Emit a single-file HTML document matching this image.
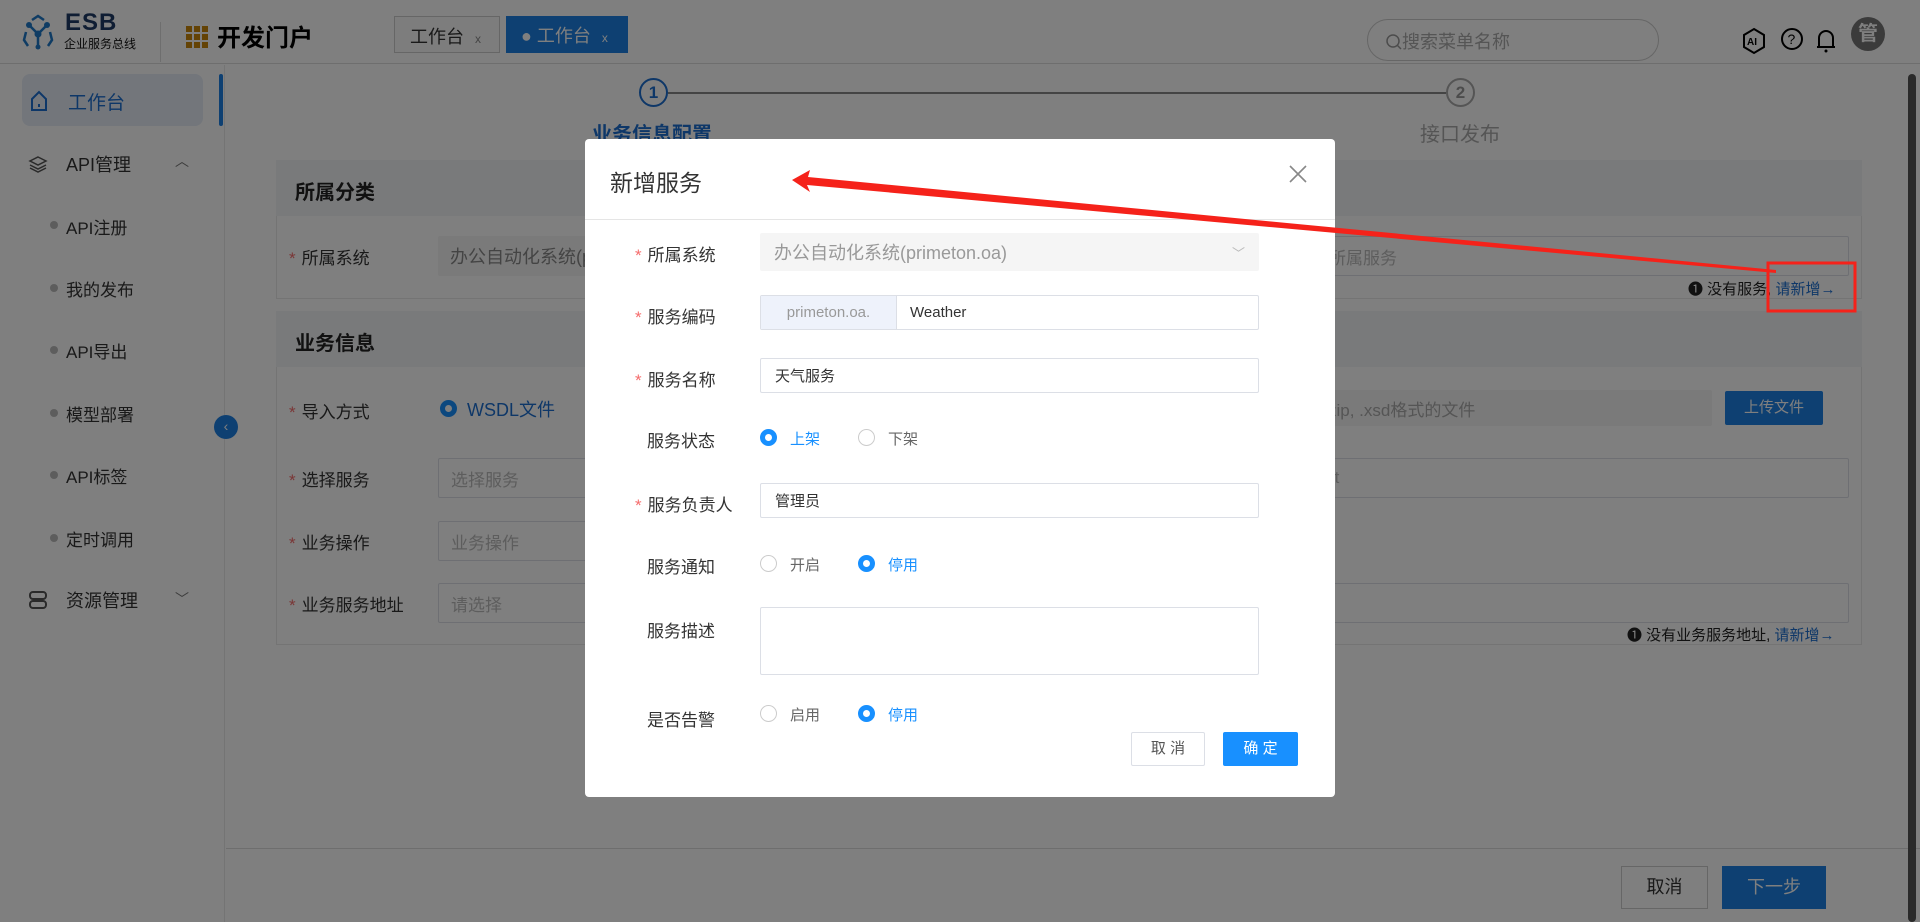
<!DOCTYPE html>
<html><head><meta charset="utf-8"><style>
*{box-sizing:border-box;margin:0;padding:0}
body{width:1920px;height:922px;overflow:hidden;position:relative;background:#fff;font-family:"Liberation Sans","Noto Sans CJK SC",sans-serif;color:#333;font-size:17px}
.a{position:absolute}
.inp{position:absolute;border:1px solid #dcdfe6;background:#fff;border-radius:2px;color:#bbb;font-size:17px;padding-left:12px;display:flex;align-items:center}
.req{color:#f56c6c;margin-right:6px}
.lbl{position:absolute;font-size:17px;color:#333}
.side{position:absolute;left:52px;font-size:17px;color:#333}
.dot{position:absolute;left:50px;width:8px;height:8px;border-radius:50%;background:#bbb}
.mlbl{position:absolute;font-size:17px;color:#333;left:635px;white-space:nowrap}
.mlbl.n{left:647px}
.mi{position:absolute;left:760px;width:499px;height:35px;border:1px solid #dcdfe6;border-radius:2px;background:#fff;font-size:15px;color:#333;display:flex;align-items:center;padding-left:14px}
.rad{position:absolute;width:17px;height:17px;border-radius:50%;border:1px solid #ccc;background:#fff}
.rad.on{border:5px solid #1890ff}
.rt{position:absolute;font-size:15px;color:#666}
.rt.on{color:#1890ff}
</style></head><body>
<!-- header -->
<div class="a" style="left:0;top:0;width:1920px;height:64px;border-bottom:1px solid #ddd;background:#fff"></div>
<svg class="a" style="left:20px;top:14px" width="36" height="36" viewBox="0 0 36 36"><g stroke="#1e78c8" stroke-width="2.5" fill="none"><path d="M12 6 L18 2 L24 6"/><path d="M6 18 L4 26 L8 32"/><path d="M30 18 L32 26 L28 32"/><path d="M9 11 L18 20 L27 11 M18 20 V32"/></g><circle cx="9" cy="11" r="3" fill="#1e78c8"/><circle cx="27" cy="11" r="3" fill="#1e78c8"/><circle cx="18" cy="20" r="3.5" fill="#1e78c8"/><circle cx="18" cy="33" r="2.5" fill="#1e78c8"/></svg>
<div class="a" style="left:65px;top:9px;font-size:24px;font-weight:bold;color:#1e3b66;letter-spacing:1px">ESB</div>
<div class="a" style="left:64px;top:35px;font-size:12px;color:#111">企业服务总线</div>
<div class="a" style="left:160px;top:22px;width:1px;height:40px;background:#ddd"></div>
<svg class="a" style="left:186px;top:26px" width="22" height="22"><g fill="#c8870a"><rect x="0" y="0" width="6" height="6"/><rect x="8" y="0" width="6" height="6"/><rect x="16" y="0" width="6" height="6"/><rect x="0" y="8" width="6" height="6"/><rect x="8" y="8" width="6" height="6"/><rect x="16" y="8" width="6" height="6"/><rect x="0" y="16" width="6" height="6"/><rect x="8" y="16" width="6" height="6"/><rect x="16" y="16" width="6" height="6"/></g></svg>
<div class="a" style="left:217px;top:18px;font-size:24px;font-weight:bold;color:#000">开发门户</div>
<div class="a" style="left:394px;top:16px;width:106px;height:37px;border:1px solid #ccc;background:#fafafa;font-size:18px;color:#333;padding:6px 0 0 15px">工作台 <span style="font-size:12px;color:#888;margin-left:6px">x</span></div>
<div class="a" style="left:506px;top:16px;width:122px;height:37px;background:#1c80e4;color:#fff;font-size:18px;padding:6px 0 0 15px">● 工作台 <span style="font-size:12px;margin-left:6px">x</span></div>
<div class="a" style="left:1367px;top:19px;width:292px;height:42px;border:1px solid #ccc;border-radius:21px;font-size:18px;color:#aaa;padding:8px 0 0 18px">
<svg width="16" height="16" style="vertical-align:-2px"><circle cx="7" cy="7" r="6" fill="none" stroke="#999" stroke-width="1.5"/><path d="M11 11 L15 15" stroke="#999" stroke-width="1.5"/></svg>搜索菜单名称</div>
<svg class="a" style="left:1741px;top:27px" width="26" height="28" viewBox="0 0 26 28"><path d="M13 2 L23 8 V20 L13 26 L3 20 V8 Z" fill="none" stroke="#000" stroke-width="2"/><text x="6" y="18" font-size="10" font-weight="bold" font-family="Liberation Sans">AI</text></svg>
<svg class="a" style="left:1780px;top:27px" width="24" height="24"><circle cx="12" cy="12" r="10" fill="none" stroke="#000" stroke-width="2"/><text x="7.5" y="17" font-size="14" font-family="Liberation Sans">?</text></svg>
<svg class="a" style="left:1815px;top:26px" width="22" height="28"><path d="M4 21 V12 A7 7 0 0 1 18 12 V21 Z M2 21 H20" fill="none" stroke="#000" stroke-width="2"/><circle cx="11" cy="25" r="1.5" fill="#000"/></svg>
<div class="a" style="left:1851px;top:17px;width:34px;height:34px;border-radius:50%;background:#777;color:#fff;font-size:20px;text-align:center;line-height:34px;font-weight:bold">管</div>
<!-- sidebar -->
<div class="a" style="left:0;top:65px;width:225px;height:857px;background:#fff;border-right:1px solid #e8e8e8"></div>
<div class="a" style="left:22px;top:74px;width:181px;height:52px;background:#e6edf7;border-radius:8px"></div>
<div class="a" style="left:219px;top:74px;width:4px;height:52px;background:#1c80e4;border-radius:2px"></div>
<svg class="a" style="left:30px;top:90px" width="18" height="22"><path d="M2 9 L9 2 L16 9 V20 H2 Z" fill="none" stroke="#1c6fd0" stroke-width="2"/><path d="M9 14 V17" stroke="#1c6fd0" stroke-width="2"/></svg>
<div class="side" style="left:68px;top:88px;color:#1c6fd0;font-size:19px">工作台</div>
<svg class="a" style="left:28px;top:155px" width="20" height="18"><path d="M10 2 L18 6 L10 10 L2 6 Z M2 10 L10 14 L18 10 M2 13 L10 17 L18 13" fill="none" stroke="#555" stroke-width="1.5"/></svg>
<div class="side" style="left:66px;top:151px;font-size:18px">API管理</div>
<div class="a" style="left:175px;top:151px;color:#777;font-size:14px">︿</div>
<div class="dot" style="top:221px"></div><div class="side" style="left:66px;top:214px">API注册</div>
<div class="dot" style="top:284px"></div><div class="side" style="left:66px;top:276px">我的发布</div>
<div class="dot" style="top:346px"></div><div class="side" style="left:66px;top:338px">API导出</div>
<div class="dot" style="top:409px"></div><div class="side" style="left:66px;top:401px">模型部署</div>
<div class="dot" style="top:471px"></div><div class="side" style="left:66px;top:463px">API标签</div>
<div class="dot" style="top:534px"></div><div class="side" style="left:66px;top:526px">定时调用</div>
<svg class="a" style="left:28px;top:590px" width="20" height="20"><rect x="2" y="2" width="16" height="7" rx="3" fill="none" stroke="#555" stroke-width="2"/><rect x="2" y="11" width="16" height="7" rx="3" fill="none" stroke="#555" stroke-width="2"/></svg>
<div class="side" style="left:66px;top:587px;font-size:18px">资源管理</div>
<div class="a" style="left:175px;top:589px;color:#777;font-size:14px">﹀</div>
<div class="a" style="left:214px;top:415px;width:24px;height:24px;border-radius:50%;background:#1c80e4;color:#fff;font-size:14px;text-align:center;line-height:23px">‹</div>
<!-- steps -->
<div class="a" style="left:639px;top:78px;width:29px;height:29px;border:2px solid #1c6fd0;border-radius:50%;color:#1c6fd0;text-align:center;line-height:25px;font-size:17px;font-weight:bold">1</div>
<div class="a" style="left:668px;top:92px;width:778px;height:2px;background:#888"></div>
<div class="a" style="left:1446px;top:78px;width:29px;height:29px;border:2px solid #aaa;border-radius:50%;color:#999;text-align:center;line-height:25px;font-size:17px;font-weight:bold">2</div>
<div class="a" style="left:592px;top:118px;font-size:20px;font-weight:bold;color:#1c6fd0">业务信息配置</div>
<div class="a" style="left:1420px;top:118px;font-size:20px;color:#aaa">接口发布</div>
<!-- card1 -->
<div class="a" style="left:276px;top:160px;width:1586px;height:139px;border:1px solid #e8e8e8"></div>
<div class="a" style="left:276px;top:160px;width:1586px;height:56px;background:#f2f4f7"></div>
<div class="a" style="left:295px;top:176px;font-size:20px;font-weight:bold;color:#222">所属分类</div>
<div class="lbl" style="left:289px;top:244px"><span class="req">*</span>所属系统</div>
<div class="inp" style="left:438px;top:236px;width:300px;height:40px;background:#f5f5f5;border:none;color:#888;font-size:18px">办公自动化系统(p</div>
<div class="inp" style="left:1316px;top:236px;width:533px;height:40px">所属服务</div>
<div class="a" style="left:1688px;top:278px;font-size:15px;color:#222">❶ 没有服务, <span style="color:#1c6fd0">请新增→</span></div>
<!-- card2 -->
<div class="a" style="left:276px;top:311px;width:1586px;height:334px;border:1px solid #e8e8e8"></div>
<div class="a" style="left:276px;top:311px;width:1586px;height:56px;background:#f2f4f7"></div>
<div class="a" style="left:295px;top:327px;font-size:20px;font-weight:bold;color:#222">业务信息</div>
<div class="lbl" style="left:289px;top:398px"><span class="req">*</span>导入方式</div>
<div class="rad on" style="left:440px;top:400px"></div><div class="a" style="left:467px;top:396px;font-size:18px;color:#1c6fd0">WSDL文件</div>
<div class="inp" style="left:1316px;top:390px;width:396px;height:36px;background:#f5f5f5;border:none;color:#aaa">zip, .xsd格式的文件</div>
<div class="a" style="left:1725px;top:391px;width:98px;height:34px;background:#1c80e4;color:#fff;font-size:15px;text-align:center;line-height:34px;border-radius:2px">上传文件</div>
<div class="lbl" style="left:289px;top:466px"><span class="req">*</span>选择服务</div>
<div class="inp" style="left:438px;top:458px;width:300px;height:40px">选择服务</div>
<div class="inp" style="left:1316px;top:458px;width:533px;height:40px">rt</div>
<div class="lbl" style="left:289px;top:529px"><span class="req">*</span>业务操作</div>
<div class="inp" style="left:438px;top:521px;width:300px;height:40px">业务操作</div>
<div class="lbl" style="left:289px;top:591px"><span class="req">*</span>业务服务地址</div>
<div class="inp" style="left:438px;top:583px;width:300px;height:40px">请选择</div>
<div class="inp" style="left:1316px;top:583px;width:533px;height:40px"></div>
<div class="a" style="left:1627px;top:624px;font-size:15px;color:#222">❶ 没有业务服务地址, <span style="color:#1c6fd0">请新增→</span></div>
<!-- footer -->
<div class="a" style="left:226px;top:848px;width:1694px;height:1px;background:#ddd"></div>
<div class="a" style="left:1621px;top:866px;width:87px;height:43px;border:1px solid #ccc;background:#fff;font-size:18px;text-align:center;line-height:41px">取消</div>
<div class="a" style="left:1722px;top:866px;width:104px;height:43px;background:#1c80e4;color:#fff;font-size:18px;text-align:center;line-height:43px">下一步</div>
<div class="a" style="left:1908px;top:74px;width:8px;height:848px;background:#555;border-radius:4px"></div>
<!-- overlay -->
<div class="a" style="left:0;top:0;width:1920px;height:922px;background:rgba(0,0,0,.5)"></div>
<!-- modal -->
<div class="a" style="left:585px;top:139px;width:750px;height:658px;background:#fff;border-radius:4px"></div>
<div class="a" style="left:610px;top:164px;font-size:23px;color:#333">新增服务</div>
<svg class="a" style="left:1289px;top:165px" width="18" height="18"><path d="M1 1 L17 17 M17 1 L1 17" stroke="#888" stroke-width="1.6"/></svg>
<div class="a" style="left:585px;top:219px;width:750px;height:1px;background:#e5e5e5"></div>
<div class="mlbl" style="top:241px"><span class="req">*</span>所属系统</div>
<div class="mi" style="top:233px;height:38px;background:#f5f5f5;border:none;color:#999;font-size:18px">办公自动化系统(primeton.oa)<span style="position:absolute;right:14px;color:#bbb;font-size:13px">﹀</span></div>
<div class="mlbl" style="top:303px"><span class="req">*</span>服务编码</div>
<div class="mi" style="top:295px;padding-left:0"><span style="width:136px;height:33px;background:#eef2fb;border-right:1px solid #dcdfe6;color:#999;text-align:center;line-height:33px">primeton.oa.</span><span style="padding-left:13px">Weather</span></div>
<div class="mlbl" style="top:366px"><span class="req">*</span>服务名称</div>
<div class="mi" style="top:358px">天气服务</div>
<div class="mlbl n" style="top:427px">服务状态</div>
<div class="rad on" style="left:760px;top:429px"></div><div class="rt on" style="left:790px;top:428px">上架</div>
<div class="rad" style="left:858px;top:429px"></div><div class="rt" style="left:888px;top:428px">下架</div>
<div class="mlbl" style="top:491px"><span class="req">*</span>服务负责人</div>
<div class="mi" style="top:483px">管理员</div>
<div class="mlbl n" style="top:553px">服务通知</div>
<div class="rad" style="left:760px;top:555px"></div><div class="rt" style="left:790px;top:554px">开启</div>
<div class="rad on" style="left:858px;top:555px"></div><div class="rt on" style="left:888px;top:554px">停用</div>
<div class="mlbl n" style="top:617px">服务描述</div>
<div class="mi" style="top:607px;height:68px"></div>
<div class="mlbl n" style="top:706px">是否告警</div>
<div class="rad" style="left:760px;top:705px"></div><div class="rt" style="left:790px;top:704px">启用</div>
<div class="rad on" style="left:858px;top:705px"></div><div class="rt on" style="left:888px;top:704px">停用</div>
<div class="a" style="left:1131px;top:732px;width:74px;height:34px;border:1px solid #dcdfe6;font-size:15px;color:#555;text-align:center;line-height:32px;border-radius:2px">取 消</div>
<div class="a" style="left:1223px;top:732px;width:75px;height:34px;background:#1890ff;color:#fff;font-size:15px;text-align:center;line-height:34px;border-radius:2px">确 定</div>
<!-- annotation -->
<svg class="a" style="left:0;top:0" width="1920" height="922"><polygon points="792,180 810,170 808,177 1776,270 1776,273 807,185 810,192" fill="#f5221a"/><rect x="1768" y="263" width="87" height="48" fill="none" stroke="#f5221a" stroke-width="3"/></svg>
</body></html>
